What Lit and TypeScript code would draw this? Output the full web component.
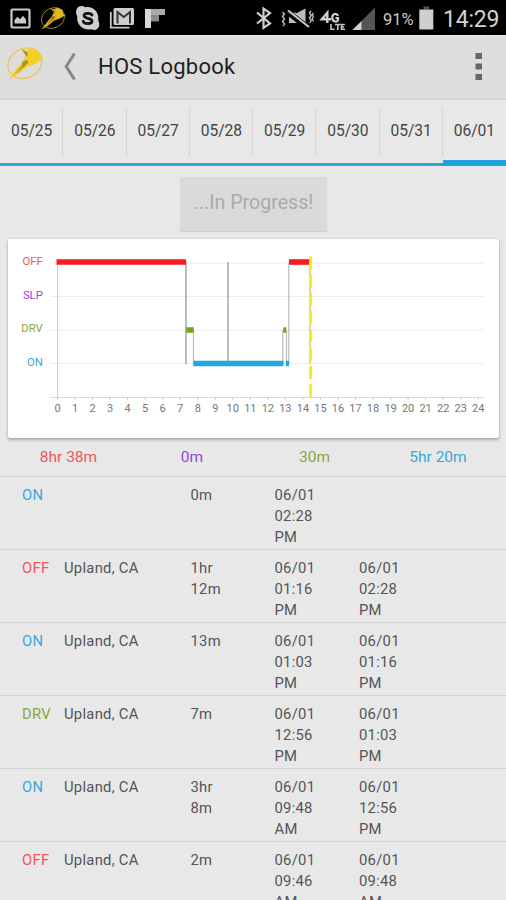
import { LitElement, html, svg, css } from "lit";
import { customElement, property } from "lit/decorators.js";

type Duty = "OFF" | "SLP" | "DRV" | "ON";

interface Entry {
  duty: Duty;
  place: string;
  length: string[];
  start: string[];
  end: string[];
}

const DAYS = ["05/25", "05/26", "05/27", "05/28", "05/29", "05/30", "05/31", "06/01"];

const TOTALS: { duty: Duty; text: string }[] = [
  { duty: "OFF", text: "8hr 38m" },
  { duty: "SLP", text: "0m" },
  { duty: "DRV", text: "30m" },
  { duty: "ON", text: "5hr 20m" },
];

const ENTRIES: Entry[] = [
  { duty: "ON", place: "", length: ["0m"], start: ["06/01", "02:28", "PM"], end: [] },
  { duty: "OFF", place: "Upland, CA", length: ["1hr", "12m"], start: ["06/01", "01:16", "PM"], end: ["06/01", "02:28", "PM"] },
  { duty: "ON", place: "Upland, CA", length: ["13m"], start: ["06/01", "01:03", "PM"], end: ["06/01", "01:16", "PM"] },
  { duty: "DRV", place: "Upland, CA", length: ["7m"], start: ["06/01", "12:56", "PM"], end: ["06/01", "01:03", "PM"] },
  { duty: "ON", place: "Upland, CA", length: ["3hr", "8m"], start: ["06/01", "09:48", "AM"], end: ["06/01", "12:56", "PM"] },
  { duty: "OFF", place: "Upland, CA", length: ["2m"], start: ["06/01", "09:46", "AM"], end: ["06/01", "09:48", "AM"] },
];

const dutyColors = css`
  .OFF { color: #f2555a; fill: #f2555a; }
  .SLP { color: #8f48d8; fill: #8f48d8; }
  .DRV { color: #87a83e; fill: #87a83e; }
  .ON { color: #38a8dc; fill: #38a8dc; }
`;

/* Winged emblem inside a ring, 36 x 36 */
const emblem = (ring: string, body: string, shade: string) => svg`
  <ellipse cx="17.6" cy="16.8" rx="17.6" ry="14.6" transform="rotate(-28 17.6 16.8)" fill="none" stroke=${ring} stroke-width="1.3"/>
  <path d="M14 2.6 L19 4 L24 1.8 L31.5 4.5 L32.5 10.5 L36 12.6 L27.7 17.6 L19.4 20.4 L10 28 L0.8 33.6 L9 22.5 L15.4 14.8 L19 8.8 Z" fill=${body}/>
  <path d="M14 2.6 L20.5 6 L20 10.5 L18.5 9 Z M15.4 14.8 L19.8 13.5 L21 16.2 L16.5 20.5 L7 28 L14.5 19.5 Z" fill=${shade}/>
`;

@customElement("status-bar")
export class StatusBar extends LitElement {
  static styles = css`
    :host { display: flex; height: 35px; background: #000; color: #c9c9c9; font-family: Roboto, sans-serif; justify-content: space-between; }
    .group { display: flex; align-items: center; height: 35px; }
    svg { display: block; flex: none; }
    .battery { font-size: 16.5px; width: 33px; white-space: nowrap; line-height: 35px; padding-top: 4px; }
    .clock { font-size: 23px; line-height: 35px; width: 63px; padding-top: 3px; color: #d2d2d2; white-space: nowrap; letter-spacing: -0.2px; }
  `;
  render() {
    return html`
      <div class="group">
        <svg width="170" height="35" viewBox="0 0 170 35">
          <rect x="11.5" y="9.5" width="18" height="18" rx="1" fill="none" stroke="#c9c9c9" stroke-width="2.2"/>
          <path d="M14.5 23.5 V20 L17.5 16.8 L20 19.3 L23 15.8 L26 19.5 V23.5 Z" fill="#c9c9c9"/>
          <g transform="translate(41 6.6) scale(.68)">${emblem("#a68a1c", "#e0b818", "#8e7512")}</g>
          <path d="M79 6.5 C81 5.5 83.5 6 85 7.2 C94 6 99.5 13 98.2 20.5 C101.5 26 97 32 91.5 29.2 C83 31 76 24.5 77.3 16.3 C75 12.5 76 8.5 79 6.5 Z" fill="#cfcfcf"/>
          <path d="M92 15 C90.8 12.6 84 12.7 84 15.6 C84 19.2 92 17.4 92 21 C92 24.4 84.4 24.3 83.3 21.4" fill="none" stroke="#111" stroke-width="2.8" stroke-linecap="round"/>
          <path d="M110.8 12 V27.7 H129.5" fill="none" stroke="#c9c9c9" stroke-width="1.8"/>
          <rect x="113.5" y="8" width="20.5" height="17" rx="1.5" fill="#cdcdcd"/>
          <path d="M117.5 23.5 V12 L123.8 17 L130 12 V23.5" fill="none" stroke="#333" stroke-width="2"/>
          <path d="M145 9 H151 V28 H145 Z" fill="#d8d8d8"/>
          <path d="M151 9 H165 V15 H151 Z" fill="#aaa"/>
          <path d="M151 15 H159 V21.5 H151 Z" fill="#8b8b8b"/>
        </svg>
      </div>
      <div class="group">
        <svg width="128" height="35" viewBox="255 0 128 35">
          <path d="M257 12.5 L270 23.5 L263.5 28 V8.5 L270 13 L257 23.5" fill="none" stroke="#cfcfcf" stroke-width="2.2"/>
          <path d="M282.5 12 l2 2 l-2 2.5 l2 2.5 l-2 2.5 l2 2.5 l-1.5 2 M311 11 l-1.5 2 l1.7 2.5 l-1.7 2.5 l1.7 2.5 l-1.5 2.5 M313.3 13 l-1 1.5 l1 2 l-1 2.5 l1 2.5" fill="none" stroke="#bdbdbd" stroke-width="1.4"/>
          <path d="M289 12 V23 H297 L305.5 26 V8.5 L297 13 Z" fill="#bdbdbd"/>
          <path d="M287 11.5 L309 28.5" stroke="#000" stroke-width="6"/>
          <path d="M288 10.5 L309 27" stroke="#c9c9c9" stroke-width="2.2"/>
          <path d="M327.3 23 V12.7 L321.8 19.3 H331" fill="none" stroke="#cfcfcf" stroke-width="2.4"/>
          <path d="M338 16 C337 13 332.5 13.2 332.3 17.2 C332 21.5 336.5 23 338 20.2 V18.2 H335.5" fill="none" stroke="#cfcfcf" stroke-width="2.2"/>
          <path d="M331 24 V29.2 H334.5 M335 24.5 H340.5 M337.8 24 V30 M344.8 24.5 H341.5 V29.3 H345 M341 27 H344" fill="none" stroke="#c4c4c4" stroke-width="1.6"/>
          <path d="M352.5 30 L375 7.5 V30 Z" fill="#555"/>
          <path d="M352.5 30 L361.5 21 V30 Z" fill="#cfcfcf"/>
        </svg>
        <span class="battery">91%</span>
        <svg width="27" height="35" viewBox="416 0 27 35">
          <rect x="423.5" y="6.5" width="5.5" height="3" fill="#555"/>
          <rect x="419.3" y="9.5" width="14" height="20" fill="#cfcfcf"/>
        </svg>
        <span class="clock">14:29</span>
      </div>
    `;
  }
}

@customElement("title-bar")
export class TitleBar extends LitElement {
  static styles = css`
    :host { display: flex; box-sizing: border-box; height: 65px; background: #ddd; border-top: 1px solid #eee; border-bottom: 2px solid #d7d8d6; font-family: Roboto, sans-serif; }
    svg { display: block; flex: none; }
    .title { flex: 1; font-size: 22px; line-height: 61px; color: #222; letter-spacing: 0.25px; }
  `;
  render() {
    return html`
      <svg width="98" height="62" viewBox="0 36 98 62">
        <g transform="translate(7.3 46.5)">${emblem("#e6c65c", "#f5cf22", "#a99040")}</g>
        <path d="M74.5 53.5 L66.2 66.5 L74.5 79.5" fill="none" stroke="#888" stroke-width="3"/>
      </svg>
      <span class="title">HOS Logbook</span>
      <svg width="56" height="62" viewBox="450 36 56 62">
        <path d="M475.5 53 h6.5 v6 h-6.5 Z M475.5 63.5 h6.5 v6 h-6.5 Z M475.5 74 h6.5 v6 h-6.5 Z" fill="#666"/>
      </svg>
    `;
  }
}

@customElement("day-tabs")
export class DayTabs extends LitElement {
  @property() selected = "06/01";
  static styles = css`
    :host { display: grid; grid-template-columns: repeat(8, 1fr); height: 66px; font-family: Roboto, sans-serif; }
    .tab { display: flex; box-sizing: border-box; padding-top: 8px; border-bottom: 3px solid #2ba6d9; }
    .tab.selected { border-bottom: 6px solid #1fa3dc; }
    .label { flex: 1; height: 49px; line-height: 47px; text-align: center; text-indent: 1px; font-size: 15.6px; color: #454545; border-right: 1px solid #d6d6d6; }
    .tab:last-child .label { border-color: transparent; }
  `;
  render() {
    return DAYS.map((d) => html`<div class="tab ${d === this.selected ? "selected" : ""}"><span class="label">${d}</span></div>`);
  }
}

@customElement("duty-chart")
export class DutyChart extends LitElement {
  static styles = [
    dutyColors,
    css`
      :host { display: block; height: 199px; margin: 0 7px 0 8px; background: #fff; border-radius: 2px; box-shadow: 0 2px 3px #aaa, 0 0 2px #bbb; font-family: Roboto, sans-serif; }
      svg { display: block; }
      .duty { font-size: 11.3px; text-anchor: end; }
      .hour { font-size: 11px; text-anchor: middle; fill: #777; }
    `,
  ];
  render() {
    const x = (h: number) => 57.5 + h * 17.53;
    const rows: [Duty, number][] = [["OFF", 263], ["SLP", 296.5], ["DRV", 330], ["ON", 363.5]];
    return html`
      <svg width="491" height="199" viewBox="8 239 491 199">
        ${rows.map(([name, y]) => svg`
          <path d="M50 ${y} H484" stroke="#ececec" stroke-width="1"/>
          <text class="duty ${name}" x="42.8" y=${y + 2.4}>${name}</text>`)}
        <path d="M50 397.5 H484" stroke="#dadada" stroke-width="1"/>
        <path d="M57.5 263 V400" stroke="#ccc" stroke-width="1"/>
        ${Array.from({ length: 25 }, (_, h) => svg`
          <path d="M${x(h)} 397 V400" stroke="#ccc" stroke-width="1"/>
          <text class="hour" x=${x(h)} y="411.8">${h}</text>`)}
        <path d="M186 262 V364 M228 262 V364" fill="none" stroke="#999" stroke-width="1.3"/>
        <path d="M193.5 330 V364 M282.8 330 V362 M286.5 330 V364 M288.8 263 V364" fill="none" stroke="#bbb" stroke-width="1.2"/>
        <path d="M56.5 262 H186" stroke="#f71c20" stroke-width="5.6"/>
        <path d="M289 262 H310.5" stroke="#f71c20" stroke-width="5.6"/>
        <path d="M186.3 330 H193.8 M283.3 330 H286.3" stroke="#78a41f" stroke-width="5.4"/>
        <path d="M193.3 363.5 H283.5 M286 363.5 H289" stroke="#1ea9e0" stroke-width="5.6"/>
        <path d="M310 264 V364" stroke="#aaa" stroke-width="1"/>
        <path d="M310.6 256.2 V397.5" stroke="#f4ec20" stroke-width="3" stroke-dasharray="13 5.3"/>
      </svg>
    `;
  }
}

@customElement("log-row")
export class LogRow extends LitElement {
  @property({ attribute: false }) entry!: Entry;
  static styles = [
    dutyColors,
    css`
      :host { display: grid; grid-template-columns: 42px 126.5px 84px 84.5px 1fr; box-sizing: border-box; height: 73.1px; padding: 8px 0 0 22px; border-top: 1px solid #d4d4d4; font: 14.8px/21px Roboto, sans-serif; letter-spacing: 0.27px; color: #555; }
      .line { display: block; }
    `,
  ];
  render() {
    const stack = (lines: string[]) => html`<div>${lines.map((l) => html`<span class="line">${l}</span>`)}</div>`;
    const e = this.entry;
    return html`
      <div class=${e.duty}>${e.duty}</div>
      <div>${e.place}</div>
      ${stack(e.length)}${stack(e.start)}${stack(e.end)}
    `;
  }
}

@customElement("app-root")
export class AppRoot extends LitElement {
  static styles = [
    dutyColors,
    css`
      :host { display: block; width: 506px; height: 900px; overflow: hidden; background: #e8e8e8; font-family: Roboto, sans-serif; }
      .action { display: flex; justify-content: center; height: 62px; padding: 11px 0 0 1px; }
      .progress { box-sizing: border-box; width: 147px; height: 54px; border: 0; border-radius: 1px; padding: 0 0 4px; background: #dadada; color: #aaa; box-shadow: 0 1px 1px #ccc; font: 19.6px Roboto, sans-serif; }
      .totals { display: grid; grid-template-columns: 137px 110px 135px 112px; height: 38px; line-height: 38px; font-size: 15.5px; text-align: center; }
    `,
  ];
  render() {
    return html`
      <status-bar></status-bar>
      <title-bar></title-bar>
      <day-tabs></day-tabs>
      <div class="action"><button class="progress">...In Progress!</button></div>
      <duty-chart></duty-chart>
      <div class="totals">${TOTALS.map((t) => html`<span class=${t.duty}>${t.text}</span>`)}</div>
      ${ENTRIES.map((e) => html`<log-row .entry=${e}></log-row>`)}
    `;
  }
}
